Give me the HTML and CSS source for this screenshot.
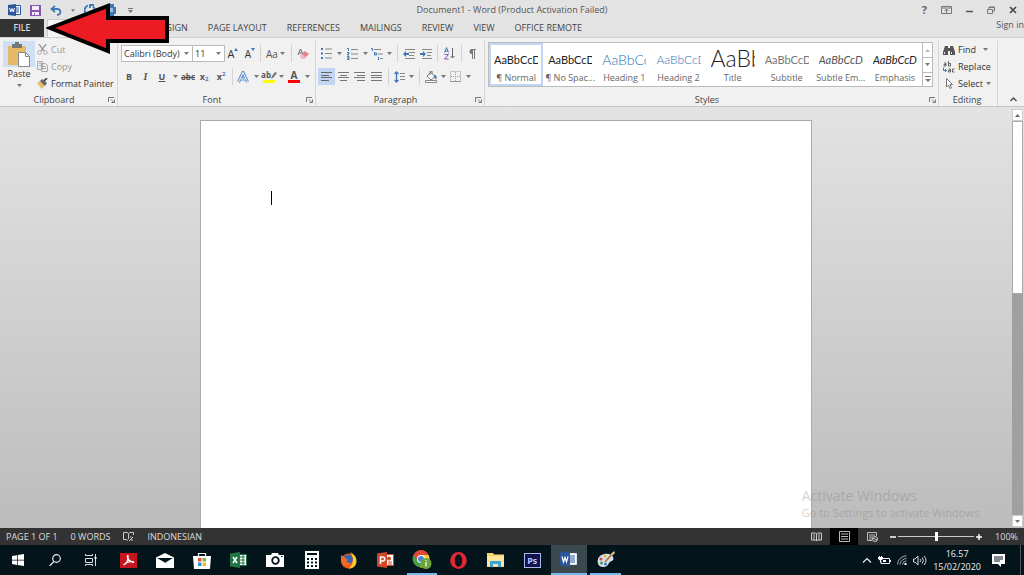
FILE: index.html
```html
<!DOCTYPE html>
<html lang="en">
<head>
<meta charset="utf-8">
<title>Document1 - Word</title>
<link rel="stylesheet" href="styles.css">
</head>
<body>
<svg class="defs" aria-hidden="true">
  <symbol id="caret" viewBox="0 0 5 3"><path d="M0 0h5L2.5 3z" fill="#777"/></symbol>
  <symbol id="launch" viewBox="0 0 7 6"><path d="M.5 5V.5H6M3 2.5l2.5 2.500M6.500 2.500v3h-3" fill="none" stroke="#777"/></symbol>
</svg>
<div class="app">
  <header class="titlebar">
    <div class="quick">
      <button aria-label="Word"><svg width="13" height="12" viewBox="0 0 13 12"><path d="M7 1.500h5.500v9H7" fill="#fff" stroke="#2b579a"/><path d="M8 4h3M8 6h3M8 8h3" stroke="#2b579a"/><path d="M0 1l8-1v12l-8-1z" fill="#2b579a"/><path d="M1.500 4l1.200 4L4 4.500 5.200 8l1.300-4" fill="none" stroke="#fff"/></svg></button>
      <button aria-label="Save"><svg width="11" height="11" viewBox="0 0 11 11"><path d="M0 0h11v11H0z" fill="#8a55ad"/><path d="M2 1h7v4H2zM2 7h7v3H5V8H4v2H2z" fill="#f4eef8"/></svg></button>
      <button aria-label="Undo"><svg width="12" height="11" viewBox="0 0 12 11"><path d="M2 4h5c5 0 4 6 0 6M5 .8L1.500 4 5 7.200" fill="none" stroke="#3c78b8" stroke-width="1.800"/></svg></button>
      <button aria-label="Undo list"><svg width="4" height="3"><use href="#caret"/></svg></button>
      <button aria-label="Repeat"><svg width="12" height="12" viewBox="0 0 12 12"><path d="M4 1.500a5 5 0 1 0 5 1M6 4V1h4" fill="none" stroke="#3c78b8" stroke-width="1.800"/></svg></button>
      <button aria-label="Print preview"><svg width="12" height="12" viewBox="0 0 12 12"><path d="M1 3h10v7H1zM3 0h6v12H3z" fill="#3c78b8"/><path d="M4 5h4M4 7h4" stroke="#fff"/></svg></button>
      <button aria-label="Customize"><svg width="5" height="5" viewBox="0 0 5 5"><path d="M0 0h5v1H0zM0 2h5L2.500 5z" fill="#777"/></svg></button>
    </div>
    <h1>Document1 - Word (Product Activation Failed)</h1>
    <div class="window">
      <button class="help">?</button>
      <button aria-label="Ribbon display options"><svg width="11" height="8" viewBox="0 0 11 8"><path d="M.5.5h10v7H.5zM1 2h9M5.500 7V3.500M3.500 5l2-2 2 2" fill="none" stroke="#777"/></svg></button>
      <button aria-label="Minimize"><svg width="7" height="8" viewBox="0 0 7 8"><path d="M0 5.500h7" stroke="#555" stroke-width="1.500"/></svg></button>
      <button aria-label="Restore"><svg width="8" height="8" viewBox="0 0 8 8"><path d="M.5 3.500h5v4h-5zM2 3V1h5.500v4H6M2 1.500h5" fill="none" stroke="#777"/></svg></button>
      <button aria-label="Close"><svg width="8" height="8" viewBox="0 0 8 8"><path d="M1 1l6 6M7 1L1 7" stroke="#444" stroke-width="1.600"/></svg></button>
    </div>
  </header>
  <nav class="tabs">
    <button class="file">FILE</button>
    <button class="home">HOME</button>
    <button>INSERT</button>
    <button>DESIGN</button>
    <button>PAGE LAYOUT</button>
    <button>REFERENCES</button>
    <button>MAILINGS</button>
    <button>REVIEW</button>
    <button>VIEW</button>
    <button>OFFICE REMOTE</button>
    <a class="signin" href="#">Sign in</a>
  </nav>

  <section class="ribbon">
    <div class="group clipboard">
      <div class="body">
        <button class="paste"><span class="pasteicon"><svg width="24" height="25" viewBox="0 0 24 25"><path d="M1 4h18v19H1z" fill="#e8b968"/><path d="M5 2h3V0h4v2h3v4H5z" fill="#777"/><path d="M11.500 10.500h7l4 4v10h-11z" fill="#fff" stroke="#888"/><path d="M18.500 10.500v4h4" fill="none" stroke="#888"/></svg></span>Paste<svg width="5" height="3"><use href="#caret"/></svg></button>
        <div class="lines">
          <button class="off"><svg width="11" height="11" viewBox="0 0 11 11"><path d="M2 0l5 7M9 0L4 7" stroke="#999" stroke-width="1.300"/><circle cx="2.500" cy="8.500" r="1.800" fill="none" stroke="#aaa"/><circle cx="8.500" cy="8.500" r="1.800" fill="none" stroke="#aaa"/></svg>Cut</button>
          <button class="off"><svg width="11" height="11" viewBox="0 0 11 11"><path d="M.5.5h5v8h-5zM4.500 2.500h4l2 2v6h-6zM6 5.500h3M6 7.500h3M2 2.500h2M2 4.500h2" fill="#eee" stroke="#aaa"/></svg>Copy</button>
          <button><svg width="11" height="11" viewBox="0 0 11 11"><path d="M0 5l3-2 5 4-3 4z" fill="#e8b968"/><path d="M3 3l2-2 5 4-2 3z" fill="#666"/><path d="M7 3l3-3" stroke="#555" stroke-width="2"/></svg>Format Painter</button>
        </div>
      </div>
      <footer><span>Clipboard</span><button aria-label="Clipboard settings"><svg width="7" height="6"><use href="#launch"/></svg></button></footer>
    </div>

    <div class="group font">
      <div class="body rows">
        <div class="row font1">
          <div class="combo"><input aria-label="Font" value="Calibri (Body)"><svg width="5" height="3"><use href="#caret"/></svg></div>
          <div class="combo"><input aria-label="Font size" value="11"><svg width="5" height="3"><use href="#caret"/></svg></div>
          <button aria-label="Grow font" class="big">A<svg width="4" height="3" viewBox="0 0 4 3"><path d="M0 3h4L2 0z" fill="#3c78b8"/></svg></button>
          <button aria-label="Shrink font" class="mid">A<svg width="4" height="3" viewBox="0 0 4 3"><path d="M0 0h4L2 3z" fill="#3c78b8"/></svg></button>
          <i class="sep"></i>
          <button class="mid case">Aa<svg width="5" height="3"><use href="#caret"/></svg></button>
          <i class="sep"></i>
          <button aria-label="Clear formatting"><svg width="12" height="12" viewBox="0 0 12 12"><path d="M1 7l2.500-6L6 6M2 5h3" fill="none" stroke="#666"/><path d="M3 8l5-5 4 3-5 5H5z" fill="#e5808c"/><path d="M3 8l2-2 3.500 3L7 11H5z" fill="#f3b4bb"/></svg></button>
        </div>
        <div class="row font2">
          <button class="b">B</button><button class="i">I</button><button class="u">U</button>
          <button aria-label="Underline style"><svg width="5" height="3"><use href="#caret"/></svg></button>
          <button class="s">abc</button><button class="b">x<sub>2</sub></button><button class="b">x<sup>2</sup></button>
          <i class="sep"></i>
          <button aria-label="Text effects"><svg width="12" height="12" viewBox="0 0 12 12"><path d="M1.500 11L6 1.500 10.500 11M3.500 8h5" fill="none" stroke="#5b8fc8" stroke-width="3"/><path d="M1.500 11L6 1.500 10.500 11M3.500 8h5" fill="none" stroke="#fff"/></svg></button>
          <button aria-label="Text effects list"><svg width="5" height="3"><use href="#caret"/></svg></button>
          <button class="mark yellow">ab<svg width="6" height="7" viewBox="0 0 6 7"><path d="M0 7l1-3 3-4 2 1-3 4z" fill="#777"/></svg></button>
          <button aria-label="Highlight colors"><svg width="5" height="3"><use href="#caret"/></svg></button>
          <button class="mark red">A</button>
          <button aria-label="Font colors"><svg width="5" height="3"><use href="#caret"/></svg></button>
        </div>
      </div>
      <footer><span>Font</span><button aria-label="Font settings"><svg width="7" height="6"><use href="#launch"/></svg></button></footer>
    </div>

    <div class="group para">
      <div class="body rows">
        <div class="row para1">
          <button aria-label="Bullets"><svg width="11" height="11" viewBox="0 0 11 11"><path d="M0 0h2v2H0zM0 4.500h2v2H0zM0 9h2v2H0z" fill="#3c78b8"/><path d="M4 1h7M4 5.500h7M4 10h7" stroke="#888"/></svg></button>
          <button aria-label="Bullet list"><svg width="5" height="3"><use href="#caret"/></svg></button>
          <button aria-label="Numbering"><svg width="11" height="12" viewBox="0 0 11 12"><path d="M0 .5h1.500V3M0 4.500h2v1.500H.5V7H2M0 8.500h2v3H0M0 10h2" fill="none" stroke="#3c78b8"/><path d="M4 1.500h7M4 6h7M4 10.500h7" stroke="#888"/></svg></button>
          <button aria-label="Number list"><svg width="5" height="3"><use href="#caret"/></svg></button>
          <button aria-label="Multilevel list"><svg width="13" height="12" viewBox="0 0 13 12"><path d="M0 .5h1.500V3M3.500 4v3h2V5h-2M7.500 9v3" fill="none" stroke="#3c78b8"/><path d="M3 1.500h7M7 6h5M9 10.500h3" stroke="#888"/></svg></button>
          <button aria-label="Multilevel styles"><svg width="5" height="3"><use href="#caret"/></svg></button>
          <i class="sep"></i>
          <button aria-label="Decrease indent"><svg width="12" height="10" viewBox="0 0 12 10"><path d="M2 .5h10M6 3.500h6M6 6.500h5M2 9.500h10" stroke="#888"/><path d="M0 5l3-3v2h3v2H3v2z" fill="#3c78b8"/></svg></button>
          <button aria-label="Increase indent"><svg width="12" height="10" viewBox="0 0 12 10"><path d="M2 .5h10M7 3.500h5M7 6.500h4M2 9.500h10" stroke="#888"/><path d="M6 5L3 2v2H0v2h3v2z" fill="#3c78b8"/></svg></button>
          <i class="sep"></i>
          <button aria-label="Sort"><svg width="11" height="13" viewBox="0 0 11 13"><path d="M.5 5.500L2.500.5l2 5M1 4h3" fill="none" stroke="#3c78b8"/><path d="M.5 7.500h4l-4 4.500h4" fill="none" stroke="#8a55ad"/><path d="M8.500 1v10M6.500 9l2 2 2-2" fill="none" stroke="#666"/></svg></button>
          <i class="sep"></i>
          <button aria-label="Show marks"><svg width="8" height="10" viewBox="0 0 8 10"><path d="M4.500 10V.5M6.500 10V.5M3 .5h5" stroke="#777" fill="none"/><path d="M4 0a2.500 2.500 0 0 0 0 5z" fill="#777"/></svg></button>
        </div>
        <div class="row para2">
          <button class="on" aria-label="Align left"><svg width="11" height="9" viewBox="0 0 11 9"><path d="M0 .5h11M0 3.500h8M0 5.500h11M0 8.500h8" stroke="#666"/></svg></button>
          <button aria-label="Center"><svg width="11" height="9" viewBox="0 0 11 9"><path d="M0 .5h11M2 3.500h7M0 5.500h11M2 8.500h7" stroke="#777"/></svg></button>
          <button aria-label="Align right"><svg width="11" height="9" viewBox="0 0 11 9"><path d="M0 .5h11M3 3.500h8M0 5.500h11M3 8.500h8" stroke="#777"/></svg></button>
          <button aria-label="Justify"><svg width="11" height="9" viewBox="0 0 11 9"><path d="M0 .5h11M0 3.500h11M0 5.500h11M0 8.500h11" stroke="#777"/></svg></button>
          <i class="sep"></i>
          <button aria-label="Line spacing"><svg width="11" height="12" viewBox="0 0 11 12"><path d="M2.500 1v10M.5 3l2-2 2 2M.5 9l2 2 2-2" fill="none" stroke="#3c78b8" stroke-width="1.300"/><path d="M6 2.500h5M6 5.500h5M6 8.500h5" stroke="#888"/></svg></button>
          <button aria-label="Line spacing list"><svg width="5" height="3"><use href="#caret"/></svg></button>
          <i class="sep"></i>
          <button aria-label="Shading"><svg width="12" height="12" viewBox="0 0 12 12"><path d="M2 5l4-3.500 4 4L6 9z" fill="#fff" stroke="#777"/><path d="M5 4V0h2v3" fill="none" stroke="#777"/><path d="M9 4c3 0 3 2 2 5-1-2-2-2-2-5z" fill="#3c78b8"/><path d="M.5 9.500h11v2H.5z" fill="#fff" stroke="#888"/></svg></button>
          <button aria-label="Shading list"><svg width="5" height="3"><use href="#caret"/></svg></button>
          <button aria-label="Borders"><svg width="11" height="11" viewBox="0 0 11 11"><path d="M.5.5h10v10H.5zM5.500 1v9M1 5.500h9" fill="none" stroke="#999" stroke-dasharray="1 1"/><path d="M0 10.500h11" stroke="#999"/></svg></button>
          <button aria-label="Borders list"><svg width="5" height="3"><use href="#caret"/></svg></button>
        </div>
      </div>
      <footer><span>Paragraph</span><button aria-label="Paragraph settings"><svg width="7" height="6"><use href="#launch"/></svg></button></footer>
    </div>

    <div class="group styles">
      <div class="body">
        <div class="gallery">
          <button class="style chosen"><span class="sample">AaBbCcDc</span><span>¶ Normal</span></button>
          <button class="style"><span class="sample">AaBbCcDc</span><span>¶ No Spac...</span></button>
          <button class="style"><span class="sample h1">AaBbCc</span><span>Heading 1</span></button>
          <button class="style"><span class="sample h2">AaBbCcD</span><span>Heading 2</span></button>
          <button class="style"><span class="sample title">AaBb</span><span>Title</span></button>
          <button class="style"><span class="sample subtitle">AaBbCcD</span><span>Subtitle</span></button>
          <button class="style"><span class="sample subtle">AaBbCcDc</span><span>Subtle Em...</span></button>
          <button class="style"><span class="sample emph">AaBbCcDc</span><span>Emphasis</span></button>
          <div class="updown">
            <button aria-label="Previous styles"><svg width="5" height="3" viewBox="0 0 5 3"><path d="M0 3h5L2.500 0z" fill="#bbb"/></svg></button>
            <button aria-label="Next styles"><svg width="5" height="3"><use href="#caret"/></svg></button>
            <button aria-label="More styles"><svg width="6" height="6" viewBox="0 0 6 6"><path d="M0 .5h6" stroke="#777"/><path d="M0 3h6L3 6z" fill="#777"/></svg></button>
          </div>
        </div>
      </div>
      <footer><span>Styles</span><button aria-label="Styles settings"><svg width="7" height="6"><use href="#launch"/></svg></button></footer>
    </div>

    <div class="group editing">
      <div class="body lines">
        <button><svg width="12" height="10" viewBox="0 0 12 10"><path d="M2 1h3v2h2V1h3l2 6v3H7V6H5v4H0V7z" fill="#555"/><path d="M1.500 7v2M8.500 7v2" stroke="#ddd"/></svg>Find<svg class="gap" width="5" height="3"><use href="#caret"/></svg></button>
        <button><svg width="12" height="12" viewBox="0 0 12 12"><path d="M1 2h2v3H1V3.500h2M5.500 0v5h2V2.500h-2M5.500 8h2v3h-2V9.500h2M11.500 8h-2v3h2" fill="none" stroke="#666"/><path d="M.5 6.500v3h3M2 8l1.500 1.500L2 11" fill="none" stroke="#3c78b8"/></svg>Replace</button>
        <button><svg width="12" height="11" viewBox="0 0 12 11"><path d="M3.500.5v8.500l2-2 1.500 3.500 1.500-.7-1.500-3.300h2.500z" fill="#fff" stroke="#777"/></svg>Select<svg width="5" height="3"><use href="#caret"/></svg></button>
      </div>
      <footer><span>Editing</span></footer>
    </div>
    <div class="fold"><button aria-label="Collapse ribbon"><svg width="7" height="5" viewBox="0 0 7 5"><path d="M.5 4l3-3 3 3" fill="none" stroke="#555" stroke-width="1.500"/></svg></button></div>
  </section>

  <main class="desk">
    <article class="page"><span class="cursor"></span></article>
    <div class="scroll">
      <button aria-label="Scroll up"><svg width="5" height="3" viewBox="0 0 5 3"><path d="M0 3h5L2.500 0z" fill="#666"/></svg></button>
      <div class="track"><div class="thumb"></div></div>
      <button aria-label="Scroll down"><svg width="5" height="3"><use href="#caret"/></svg></button>
    </div>
    <div class="watermark"><p class="wm1">Activate Windows</p><p class="wm2">Go to Settings to activate Windows.</p></div>
  </main>

  <section class="status">
    <span>PAGE 1 OF 1</span><span>0 WORDS</span>
    <button aria-label="Proofing"><svg width="11" height="11" viewBox="0 0 11 11"><path d="M5 9.500L3.500 8.500H.5v-7H4l1.500 1L7 1.500h3.500V4M5.500 3v5M6 10l4-4M7 6h1.500M8 9h2" fill="none" stroke="#ccc"/></svg></button>
    <span>INDONESIAN</span>
    <div class="views">
      <button aria-label="Read mode"><svg width="11" height="10" viewBox="0 0 11 10"><path d="M.5 1h4l1 1 1-1h4v7h-4l-1 1-1-1h-4zM5.500 2v7M2 3h2M2 5h2M2 7h2M7 3h2M7 5h2M7 7h2" fill="none" stroke="#ccc"/></svg></button>
      <button class="dark" aria-label="Print layout"><svg width="11" height="11" viewBox="0 0 11 11"><path d="M.5.5h10v10H.5zM2 3h7M2 5.500h7M2 8h7" fill="none" stroke="#bbb"/></svg></button>
      <button aria-label="Web layout"><svg width="11" height="10" viewBox="0 0 11 10"><path d="M9.500 4V.5h-9v8H5M2 3h6M2 5h4M2 7h3" fill="none" stroke="#bbb"/><circle cx="8" cy="7" r="2.500" fill="#333" stroke="#ccc"/><path d="M6 6l4 2" stroke="#ccc"/></svg></button>
    </div>
    <div class="zoom"><button aria-label="Zoom out"><svg width="6" height="6" viewBox="0 0 6 6"><path d="M0 3h6" stroke="#fff" stroke-width="1.500"/></svg></button><input type="range" aria-label="Zoom" value="50"><button aria-label="Zoom in"><svg width="6" height="6" viewBox="0 0 6 6"><path d="M0 3h6M3 0v6" stroke="#fff" stroke-width="1.500"/></svg></button></div>
    <span class="percent">100%</span>
  </section>

  <footer class="taskbar">
    <div class="apps">
      <button aria-label="Start"><svg width="12" height="12" viewBox="0 0 12 12"><path d="M0 2l5-.8v4.500H0zM5.700 1L12 0v5.700H5.700zM0 6.400h5v4.500l-5-.8zM5.700 6.400H12V12l-6.300-1z" fill="#fff"/></svg></button>
      <button aria-label="Search"><svg width="12" height="12" viewBox="0 0 12 12"><circle cx="7.500" cy="4.500" r="3.800" fill="none" stroke="#eee" stroke-width="1.200"/><path d="M5 7.500L.5 12" stroke="#eee" stroke-width="1.200"/></svg></button>
      <button aria-label="Task view"><svg width="13" height="12" viewBox="0 0 13 12"><path d="M.5 0v1.500h7V0M.5 4.500h7v4h-7zM.5 12v-1.500h7V12M10.500 0v12" fill="none" stroke="#ddd"/><path d="M9.500 3h2v2h-2z" fill="#fff"/></svg></button>
      <button aria-label="Acrobat"><svg width="17" height="15" viewBox="0 0 17 15"><path d="M0 0h17v15H0z" fill="#c4161c"/><path d="M3.500 12C7 10 8.500 6 8 2.500 6.500 2 7 8 13.500 9.500 15 8 7 8 3.500 12" fill="none" stroke="#fff" stroke-width="1.200"/></svg></button>
      <button aria-label="Mail"><svg width="18" height="15" viewBox="0 0 18 15"><path d="M0 4.500L9 0l9 4.500V15H0z" fill="#fff"/><path d="M1 5h16L9.500 9.500l2 1.500z" fill="#03141a"/></svg></button>
      <button aria-label="Store"><svg width="18" height="17" viewBox="0 0 18 17"><path d="M5.500 5V1.500h7V5" fill="none" stroke="#eee" stroke-width="1.200"/><path d="M0 4h18l-1 13H1z" fill="#fff"/><path d="M5 6h3.500v3.500H5z" fill="#e5532d"/><path d="M9.500 6H13v3.500H9.500z" fill="#80b83c"/><path d="M5 10.500h3.500V14H5z" fill="#2496d4"/><path d="M9.500 10.500H13V14H9.500z" fill="#f5b925"/></svg></button>
      <button aria-label="Excel"><svg width="17" height="16" viewBox="0 0 17 16"><path d="M9 2.500h7.500v11H9" fill="#fff" stroke="#217346"/><path d="M10 5h5M10 8h5M10 11h5M13 3v10" stroke="#217346"/><path d="M0 1.500L10 0v16L0 14.500z" fill="#217346"/><path d="M3 5l4 6M7 5l-4 6" stroke="#fff" stroke-width="1.500"/></svg></button>
      <button aria-label="Camera"><svg width="18" height="14" viewBox="0 0 18 14"><path d="M0 2h5l1-2h6l1 2h5v12H0z" fill="#fff"/><circle cx="9.500" cy="7.500" r="3.300" fill="#fff" stroke="#03141a" stroke-width="1.800"/><path d="M15 3.500h1.500" stroke="#03141a"/></svg></button>
      <button aria-label="Calculator"><svg width="14" height="18" viewBox="0 0 14 18"><path d="M0 0h14v18H0z" fill="#fff"/><path d="M2 3h10M2 8h2m2 0h2m2 0h2M2 11.500h2m2 0h2m2 0h2M2 15h2m2 0h2m2 0h2" stroke="#03141a" stroke-width="2"/></svg></button>
      <button aria-label="Firefox"><svg width="17" height="17" viewBox="0 0 17 17"><circle cx="8.500" cy="9" r="7.500" fill="#ed5a24"/><path d="M10 0c3 2 7 4 6.500 10-.5 4-4 7-8 6.500C13 14 15 6 10 0z" fill="#ffc927"/><circle cx="8" cy="7.500" r="4.800" fill="#3462b5"/><path d="M1 3l3 2 4 3-2 2 5 1c-2 5-9 3-10-3z" fill="#f36b25"/></svg></button>
      <button aria-label="PowerPoint"><svg width="17" height="16" viewBox="0 0 17 16"><path d="M9 2.500h7.500v11H9" fill="#fff" stroke="#d24726"/><path d="M11 10h4M11 12h4" stroke="#d24726"/><circle cx="12" cy="6.500" r="2" fill="#d24726"/><path d="M0 1.500L10 0v16L0 14.500z" fill="#d24726"/><path d="M3.500 12V5h2c3 0 3 4 0 4h-2" fill="none" stroke="#fff" stroke-width="1.500"/></svg></button>
      <button class="open" aria-label="Chrome"><svg width="20" height="20" viewBox="0 0 20 20"><circle cx="9" cy="10" r="8.500" fill="#4a9e48"/><path d="M1.500 6C5-1 14 0 16.500 6H9v4L6 12z" fill="#df4936"/><path d="M9 6h7.500c3 6-2 13-8.500 12.500L12 12z" fill="#f7cb3b"/><circle cx="9" cy="10" r="4" fill="#fff"/><circle cx="9" cy="10" r="3" fill="#4588dd"/><circle cx="14" cy="14.500" r="5.500" fill="#6ba539"/><path d="M14 13v4.500M14 11v1" stroke="#fff" stroke-width="1.200"/></svg></button>
      <button aria-label="Opera"><svg width="17" height="17" viewBox="0 0 17 17"><ellipse cx="8.500" cy="8.500" rx="8.300" ry="8.500" fill="#e32636"/><ellipse cx="8.500" cy="8.500" rx="3.700" ry="6.200" fill="#03141a"/></svg></button>
      <button aria-label="File Explorer"><svg width="17" height="14" viewBox="0 0 17 14"><path d="M0 0h6l1 1.500h10V14H0z" fill="#f7d672"/><path d="M0 3h17v10H0z" fill="#ffe597"/><path d="M3 14V8h11v6h-3v-3H6v3z" fill="#3aa3df"/></svg></button>
      <button aria-label="Photoshop"><span class="ps">Ps</span></button>
      <button class="open active" aria-label="Word"><svg width="17" height="16" viewBox="0 0 17 16"><path d="M9 2.500h7.500v11H9" fill="#fff" stroke="#dce6f4"/><path d="M10 5h5M10 7h5M10 9h5M10 11h5" stroke="#2b579a"/><path d="M0 1.500L10 0v16L0 14.500z" fill="#2b579a"/><path d="M2 5.500L3.500 11 5 6.500 6.500 11 8 5.500" fill="none" stroke="#fff" stroke-width="1.200"/></svg></button>
      <button class="open" aria-label="Paint"><svg width="18" height="17" viewBox="0 0 18 17"><path d="M1 8c2-6 13-7 15-2 2 4-3 4-4 6s-2 4-6 4c-5 0-6-5-5-8z" fill="#d4e1eb"/><circle cx="4" cy="8" r="1.500" fill="#d44"/><circle cx="8" cy="5" r="1.500" fill="#e8b52c"/><circle cx="4.500" cy="12" r="1.500" fill="#469b4a"/><circle cx="8.500" cy="13" r="1.500" fill="#3879c4"/><path d="M8 11l8-9" stroke="#b87333" stroke-width="1.800"/><path d="M14 3l3-3 1 2-3 3z" fill="#e0bc86"/></svg></button>
    </div>
    <div class="tray">
      <button aria-label="Hidden icons"><svg width="10" height="6" viewBox="0 0 10 6"><path d="M1 5.500l4-4 4 4" fill="none" stroke="#eee" stroke-width="1.200"/></svg></button>
      <button aria-label="Battery"><svg width="13" height="9" viewBox="0 0 13 9"><path d="M4.500 2.500h7v5H3V5M12.500 4v2" fill="none" stroke="#eee"/><path d="M0 1h1V0h1v1h1V0h1v1h1v2L3 4.500v2H2v-2L0 3zM5 4h3v2H5z" fill="#fff"/></svg></button>
      <button aria-label="Wi-Fi"><svg width="10" height="10" viewBox="0 0 10 10"><path d="M.5 9.500A9 9 0 0 1 9.500.8M3 9.500A6.500 6.500 0 0 1 9.500 3.500M5.500 9.500a4 4 0 0 1 4-3.500" fill="none" stroke="#aaa"/><path d="M7.500 8h2v2h-2z" fill="#fff"/></svg></button>
      <button aria-label="Volume"><svg width="14" height="11" viewBox="0 0 14 11"><path d="M.5 4H2l3-3v9L2 7H.5zM7 4q1.500 1.500 0 3M9 2.500q3 3 0 6M11 1q4 4.500 0 9" fill="none" stroke="#ddd"/></svg></button>
      <div class="clock"><span>16.57</span><span>15/02/2020</span></div>
      <button aria-label="Notifications"><svg width="13" height="13" viewBox="0 0 13 13"><path d="M0 0h13v10H9v3l-3-3H0z" fill="#fff"/><path d="M2 3h9M2 5h9M2 7h6" stroke="#03141a"/></svg></button>
    </div>
  </footer>

  <svg class="pointer" width="124" height="54" viewBox="0 0 124 54" aria-hidden="true"><path d="M4 27L62 5v12h59v23H62v10z" fill="#ed1c24" stroke="#000" stroke-width="4"/></svg>
</div>
</body>
</html>
```
FILE: styles.css
```css
* { box-sizing: border-box; }
body { margin: 0; font: 9px/12px "Open Sans", "Noto Sans", sans-serif; color: #333; }
button, input { font: inherit; color: inherit; border: 0; padding: 0; margin: 0; background: none; }
button { display: flex; align-items: center; justify-content: center; white-space: nowrap; }
svg { flex: none; display: block; }
p, h1 { margin: 0; font-weight: normal; }
.defs { position: absolute; width: 0; height: 0; }
.app { position: relative; height: 100vh; display: flex; flex-direction: column; overflow: hidden; background: #e3e3e3; }

.titlebar { height: 18px; flex: none; display: grid; grid-template-columns: 1fr auto 1fr; align-items: center; }
.titlebar h1 { font-size: 9px; line-height: 20px; color: #555; }
.quick { display: grid; grid-template-columns: 14px 11px 12px 4px 12px 12px 8px; column-gap: 9px; padding-left: 7px; }
.window { display: flex; justify-content: flex-end; gap: 14px; padding-right: 7px; }
.help { font-size: 11px; font-weight: bold; color: #666; }

.tabs { height: 20px; flex: none; display: flex; padding-top: 1px; border-bottom: 1px solid #d0d0d0; color: #444; }
.tabs button { padding: 0 10px; }
.tabs .file { width: 44px; background: #333; color: #fff; margin-right: 3px; }
.tabs .home { background: #f5f5f5; border: 1px solid #ccc; border-bottom: 0; }
.signin { margin-left: auto; color: #555; text-decoration: none; }

.ribbon { height: 69px; flex: none; display: flex; padding: 3px 0 0; background: #f1f1f1; border-bottom: 1px solid #c6c6c6; }
.group { display: flex; flex-direction: column; border-right: 1px solid #d5d5d5; }
.body { flex: 1; display: flex; }
.group footer { height: 13px; display: grid; grid-template-columns: 1fr auto; align-items: center; padding-right: 2px; text-align: center; color: #444; }
.clipboard { width: 118px; }
.font { width: 198px; }
.para { width: 169px; }
.styles { flex: 1; }
.editing { width: 59px; }
.paste { width: 32px; margin-left: 3px; flex-direction: column; justify-content: flex-start; gap: 1px; }
.paste svg + svg, .paste > svg { margin-top: 3px; }
.pasteicon { width: 32px; height: 26px; display: grid; place-items: center; background: #cfe0f5; }
.lines { display: flex; flex-direction: column; align-items: flex-start; }
.lines button { height: 17px; gap: 3px; }
.clipboard .lines { padding-left: 2px; }
.off { color: #999; }
.rows { flex-direction: column; padding: 4px 3px 0; gap: 6px; }
.row { display: grid; height: 17px; align-items: stretch; }
.sep { justify-self: center; width: 1px; background: #d2d2d2; }
.font1 { grid-template-columns: 71px 32px 18px 16px 4px 27px 4px 20px; }
.font2 { grid-template-columns: 16px 17px 16px 10px 16px 16px 18px 4px 18px 8px 18px 7px 18px 8px; }
.para .rows { padding-left: 2px; }
.para1 { grid-template-columns: 17px 8px 19px 7px 17px 7px 8px 16px 17px 6px 18px 6px 16px; }
.para2 { grid-template-columns: 17px 16px 17px 17px 6px 17px 7px 8px 16px 8px 17px 8px; }
.combo { display: flex; align-items: center; background: #fff; border: 1px solid #bbb; padding: 0 3px 0 2px; margin-right: -1px; }
.combo input { flex: 1; min-width: 0; width: 0; }
.big { font-size: 11px; }
.mid { font-size: 10px; }
.big svg, .mid svg { align-self: flex-start; margin-top: 3px; }
.mid.case { color: #555; gap: 2px; }
.mid.case svg { align-self: center; margin-top: 0; }
.b { font-weight: bold; color: #555; }
.i { font: italic bold 10px "Liberation Serif", serif; color: #555; }
.u { text-decoration: underline; font-weight: bold; color: #555; }
.s { font-size: 8px; font-weight: bold; text-decoration: line-through; color: #555; }
sub, sup { font-size: 6px; line-height: 6px; color: #3c78b8; }
sub { align-self: flex-end; margin-bottom: 3px; }
sup { align-self: flex-start; margin-top: 3px; }
.mark { height: 13px; margin: 2px 3px 0; border-bottom: 3px solid; font-weight: bold; line-height: 10px; color: #555; }
.yellow { border-color: #ff0; font-size: 8px; }
.red { border-color: #f00; font-size: 10px; }
.on { background: #c2d5f2; }

.styles .body { padding: 1px 5px 0 3px; align-items: flex-start; }
.gallery { flex: 1; height: 45px; display: grid; grid-template-columns: repeat(8, 1fr) 10px; background: #fff; border: 1px solid #bbb; }
.style { flex-direction: column; justify-content: flex-end; padding: 0 3px; border: 2px solid transparent; min-width: 0; overflow: hidden; color: #666; }
.chosen { border-color: #c2d5f2; }
.sample { width: 100%; height: 24px; overflow: hidden; line-height: 24px; text-align: left; font-family: Lato, sans-serif; font-size: 11px; color: #222; }
.h1 { font-size: 14px; color: #2e74b5; font-weight: 300; }
.h2 { font-size: 12px; color: #2e74b5; font-weight: 300; }
.title { font-size: 23px; font-weight: 300; line-height: 20px; }
.subtitle { color: #777; }
.subtle { font-style: italic; color: #555; }
.emph { font-style: italic; }
.updown { display: grid; grid-template-rows: repeat(3, 1fr); border-left: 1px solid #bbb; }
.updown button + button { border-top: 1px solid #bbb; }
.editing .lines { padding-left: 4px; }
.editing .gap { margin-left: 4px; }
.fold { width: 26px; display: flex; align-items: flex-end; justify-content: center; padding: 0 0 4px 4px; }

.desk { position: relative; flex: 1; min-height: 0; display: grid; grid-template-columns: 1fr 12px; background: linear-gradient(#e3e3e3, #bcbcbc); }
.page { justify-self: center; width: 60.4%; margin-top: 13px; background: #fff; border: 1px solid #aaa; border-bottom: 0; padding: 70px; }
.cursor { display: block; width: 1px; height: 14px; background: #000; }
.scroll { display: flex; flex-direction: column; padding: 2px 1px 1px 0; }
.scroll button { height: 12px; background: #fff; border: 1px solid #ccc; }
.track { flex: 1; background: #a0a0a0; }
.thumb { height: 44%; background: #fff; border: 1px solid #aaa; }
.watermark { position: absolute; right: 42px; bottom: 8px; color: rgba(120, 120, 120, .35); }
.wm1 { font-size: 14px; line-height: 18px; }
.wm2 { font-size: 11px; line-height: 15px; }

.status { height: 17px; flex: none; display: flex; align-items: center; gap: 13px; padding: 0 6px; background: #333; color: #ddd; }
.views { margin-left: auto; align-self: stretch; display: grid; grid-template-columns: repeat(3, 28px); }
.dark { background: #000; }
.zoom { display: flex; align-items: center; gap: 2px; margin-left: -9px; }
.zoom input { appearance: none; width: 76px; height: 9px; background: linear-gradient(#ccc, #ccc) center / 100% 1px no-repeat; }
.zoom input::-webkit-slider-thumb { appearance: none; width: 3px; height: 9px; background: #fff; }

.taskbar { height: 30px; flex: none; display: flex; justify-content: space-between; background: #03141a; color: #eee; }
.apps { width: 624px; display: grid; grid-template-columns: repeat(17, 1fr); }
.open { margin: 0 3px; border-bottom: 2px solid #76b9ed; }
.active { margin: 0; background: #3b484e; }
.ps { width: 17px; height: 15px; border: 1px solid #a8b8f0; background: #12124c; color: #b9c8ff; font-weight: bold; line-height: 13px; }
.tray { display: flex; align-items: center; gap: 6px; padding-right: 15px; margin-right: 3px; border-right: 1px solid #555; }
.clock { display: flex; flex-direction: column; text-align: center; line-height: 13px; }
.tray .clock + button { margin-left: 5px; }

.pointer { position: absolute; left: 46px; top: 1px; }
```
